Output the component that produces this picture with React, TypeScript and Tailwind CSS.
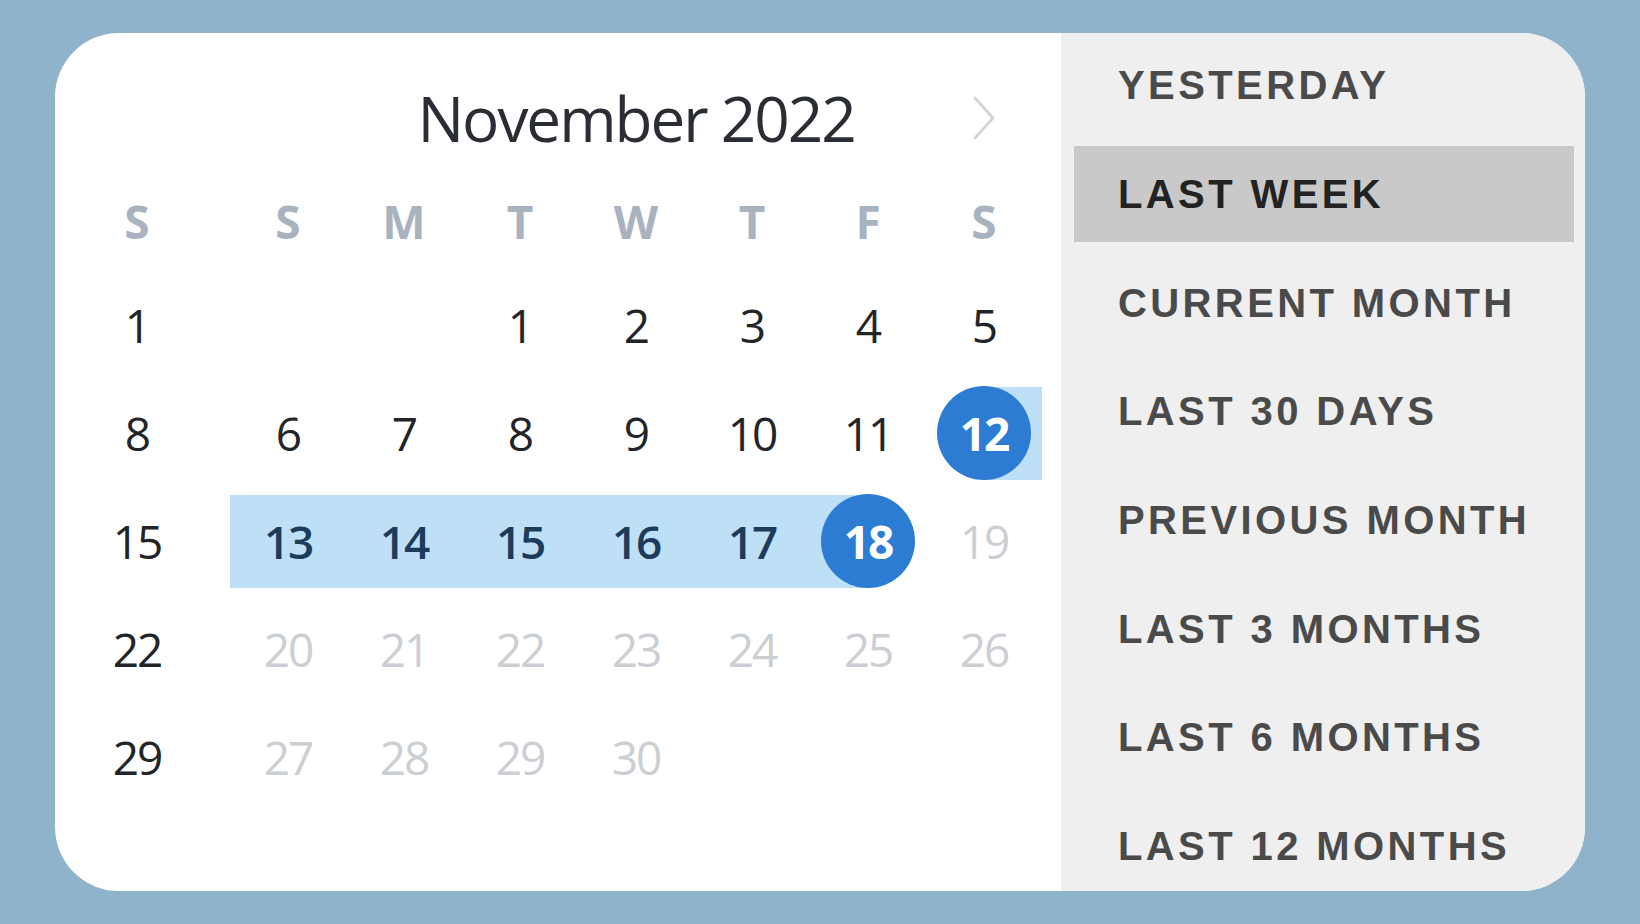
import React from "react";

type Cell = { d: number | null; kind?: "normal" | "range" | "start" | "end" | "muted"; band?: "full" | "left" | "right" };

const rows: { week: number; cells: Cell[] }[] = [
  { week: 1, cells: [{ d: null }, { d: null }, { d: 1 }, { d: 2 }, { d: 3 }, { d: 4 }, { d: 5 }] },
  { week: 8, cells: [{ d: 6 }, { d: 7 }, { d: 8 }, { d: 9 }, { d: 10 }, { d: 11 }, { d: 12, kind: "start", band: "right" }] },
  {
    week: 15,
    cells: [
      { d: 13, kind: "range", band: "full" },
      { d: 14, kind: "range", band: "full" },
      { d: 15, kind: "range", band: "full" },
      { d: 16, kind: "range", band: "full" },
      { d: 17, kind: "range", band: "full" },
      { d: 18, kind: "end", band: "left" },
      { d: 19, kind: "muted" },
    ],
  },
  { week: 22, cells: [20, 21, 22, 23, 24, 25, 26].map((d) => ({ d, kind: "muted" as const })) },
  { week: 29, cells: [{ d: 27, kind: "muted" }, { d: 28, kind: "muted" }, { d: 29, kind: "muted" }, { d: 30, kind: "muted" }, { d: null }, { d: null }, { d: null }] },
];

const days = ["S", "M", "T", "W", "T", "F", "S"];
const presets = [
  "YESTERDAY",
  "LAST WEEK",
  "CURRENT MONTH",
  "LAST 30 DAYS",
  "PREVIOUS MONTH",
  "LAST 3 MONTHS",
  "LAST 6 MONTHS",
  "LAST 12 MONTHS",
];

function DayCell({ c }: { c: Cell }) {
  let bandCls = "";
  if (c.band === "full") bandCls = "bg-[#bee0f6]";
  if (c.band === "right") bandCls = "bg-[linear-gradient(to_right,transparent_50%,#bee0f6_50%)]";
  if (c.band === "left") bandCls = "bg-[linear-gradient(to_right,#bee0f6_50%,transparent_50%)]";
  let content: React.ReactNode = null;
  if (c.d !== null) {
    if (c.kind === "start" || c.kind === "end") {
      content = (
        <div className="w-[94px] h-[94px] shrink-0 rounded-full bg-[#2b7cd2] flex items-center justify-center text-white font-bold text-[46px] tracking-[-2px] leading-none">
          {c.d}
        </div>
      );
    } else if (c.kind === "range") {
      content = <span className="text-[#1d3b5a] font-semibold text-[46px] tracking-[-2px] leading-none">{c.d}</span>;
    } else if (c.kind === "muted") {
      content = <span className="text-[#cbcfd4] text-[46px] tracking-[-2px] leading-none">{c.d}</span>;
    } else {
      content = <span className="text-[#222428] text-[46px] tracking-[-2px] leading-none">{c.d}</span>;
    }
  }
  return (
    <div className="w-[116px] h-[108px] flex items-center">
      <div className={"w-full h-[93px] flex items-center justify-center " + bandCls}>{content}</div>
    </div>
  );
}

export default function App() {
  return (
    <div className="w-[1640px] h-[924px] bg-[#8fb3cb] pt-[33px] pl-[55px]">
      <div className="w-[1530px] h-[858px] rounded-[64px] overflow-hidden flex bg-white">
        <div className="w-[1006px] shrink-0 pl-[24px] flex flex-col font-['Open_Sans',sans-serif]">
          <div className="h-[138px] pt-[32px] pl-[151px] grid grid-cols-[repeat(7,116px)] items-center">
            <div className="col-start-2 col-span-5 text-center text-[62px] tracking-[-2px] text-[#2a2e34] leading-none whitespace-nowrap">
              November 2022
            </div>
            <div className="flex justify-center">
              <svg width="26" height="46" viewBox="0 0 26 46" fill="none">
                <path d="M4 3 L22 23 L4 43" stroke="#d2d4d6" strokeWidth="3" strokeLinecap="round" strokeLinejoin="round" />
              </svg>
            </div>
          </div>
          <div className="flex">
            <div className="w-[116px] flex flex-col">
              <div className="h-[100px] flex items-center justify-center text-[#a9b3c0] font-bold text-[46px] leading-none">S</div>
              {rows.map((r) => (
                <div key={r.week} className="h-[108px] flex items-center justify-center text-[#222428] text-[46px] tracking-[-2px] leading-none">
                  {r.week}
                </div>
              ))}
            </div>
            <div className="ml-[35px] w-[812px] flex flex-col">
              <div className="h-[100px] grid grid-cols-7">
                {days.map((d, i) => (
                  <div key={i} className="flex items-center justify-center text-[#a9b3c0] font-bold text-[46px] leading-none">
                    {d}
                  </div>
                ))}
              </div>
              {rows.map((r) => (
                <div key={r.week} className="grid grid-cols-7">
                  {r.cells.map((c, i) => (
                    <DayCell key={i} c={c} />
                  ))}
                </div>
              ))}
            </div>
          </div>
        </div>
        <div className="flex-1 bg-[#efefef] flex flex-col font-['Liberation_Sans',Arial,sans-serif]">
          <div className="-mt-[2px] flex flex-col">
            {presets.map((p) => {
              const active = p === "LAST WEEK";
              return (
                <div key={p} className="h-[108.7px] flex items-center pl-[13px] pr-[11px]">
                  <div
                    className={
                      "h-[96px] w-full flex items-center pl-[44px] text-[40px] font-bold tracking-[3.4px] leading-none whitespace-nowrap " +
                      (active ? "bg-[#c9c9c9] text-[#222222]" : "text-[#4a4a4a]")
                    }
                  >
                    {p}
                  </div>
                </div>
              );
            })}
          </div>
        </div>
      </div>
    </div>
  );
}
